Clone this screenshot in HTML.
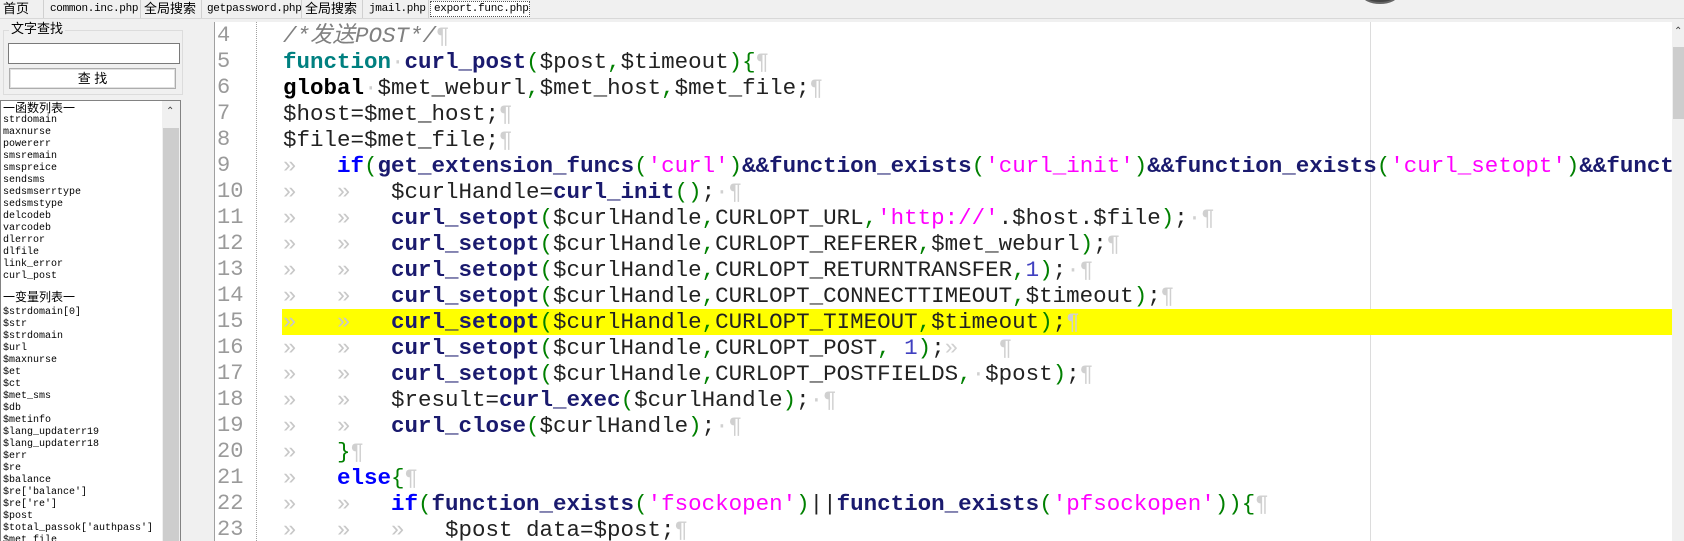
<!DOCTYPE html>
<html><head><meta charset="utf-8"><style>
*{margin:0;padding:0;box-sizing:border-box}
body{width:1684px;height:541px;overflow:hidden;background:#f0f0f0;position:relative;font-family:"Liberation Sans","Noto Sans CJK SC",sans-serif}
.tabs{position:absolute;left:0;top:0;width:1684px;height:19px;border-bottom:1px solid #d8d8d8;background:#f0f0f0}
.tab{position:absolute;top:0;height:18px;border-right:1px solid #d0d0d0;font-size:13px;line-height:18px;padding-left:3px;color:#000}
.tab.m{font-family:"Liberation Mono",monospace;font-size:11px;letter-spacing:-0.3px}
.tab.act{background:#fff;border:1px dotted #555;top:1px;height:16px;line-height:14px}
.grp{position:absolute;left:3px;top:30px;width:180px;height:65px;border:1px solid #dcdcdc}
.gt{position:absolute;left:9px;top:21px;font-size:13px;background:#f0f0f0;padding:0 2px;line-height:16px}
.inp{position:absolute;left:8px;top:43px;width:172px;height:21px;background:#fff;border:1px solid #7a7a7a}
.btn{position:absolute;left:9px;top:68px;width:167px;height:21px;border:1px solid #adadad;background:#fff;box-shadow:inset 0 0 0 1px #e1e1e1;font-size:13px;text-align:center;line-height:19px}
.list{position:absolute;left:0;top:100px;width:181px;height:441px;border:1px solid #828282;border-bottom:none;background:#fff;overflow:hidden}
.sb{position:absolute;left:161px;top:0;width:18px;height:441px;background:#f0f0f0}
.sbt{position:absolute;left:1px;top:27px;width:16px;height:414px;background:#cdcdcd}
.li{position:absolute;left:2px;font-family:"Liberation Mono",monospace;font-size:10px;line-height:12px;white-space:pre;color:#000}
.lh{font-family:"Liberation Sans","Noto Sans CJK SC",sans-serif;font-size:12px}
.ed{position:absolute;left:214px;top:22px;width:1458px;height:519px;background:#fff;border-left:1px solid #a0a0a0;overflow:hidden}
.dot{position:absolute;left:41px;top:0;height:519px;border-left:1px dotted #a0a0a0}
.guide{position:absolute;left:1155px;top:0;height:519px;border-left:1px solid #dcdcdc}
.hl{position:absolute;left:67px;top:287px;width:1391px;height:26px;background:#ffff00}
.ln{position:absolute;left:2px;font-family:"Liberation Mono",monospace;font-size:22px;color:#9a9a9a;line-height:26px}
.cd{position:absolute;left:68px;font-family:"Liberation Mono",monospace;font-size:22.5px;line-height:26px;white-space:pre;color:#222}
.t{display:inline-block;width:54px;color:#c8c8c8}
.k{font-weight:bold;color:#008080}.f{font-weight:bold;color:#1a1a6e}.b{font-weight:bold;color:#000}.i{font-weight:bold;color:#0000ff}
.s{color:#ff00ff}.p{color:#008000}.c{color:#808080;font-style:italic}.w{color:#d0d0d0}.n{color:#4040c0}
.vs{position:absolute;left:1672px;top:22px;width:12px;height:519px;background:#f0f0f0}
.vst{position:absolute;left:1px;top:25px;width:11px;height:72px;background:#cdcdcd}
</style></head><body>
<div class="tabs">
<div class="tab" style="left:0;width:44px">首页</div>
<div class="tab m" style="left:44px;width:97px;padding-left:6px">common.inc.php</div>
<div class="tab" style="left:141px;width:61px">全局搜索</div>
<div class="tab m" style="left:202px;width:100px;padding-left:5px">getpassword.php</div>
<div class="tab" style="left:302px;width:61px">全局搜索</div>
<div class="tab m" style="left:363px;width:66px;padding-left:6px">jmail.php</div>
<div class="tab m act" style="left:430px;width:100px">export.func.php</div>
</div>
<div style="position:absolute;left:1362px;top:-14px;width:36px;height:18px;border-radius:50%;background:#444;border:2px solid #666"></div>
<div class="grp"></div><div class="gt">文字查找</div>
<div class="inp"></div><div class="btn">查 找</div>
<div class="list">
<div class="sb"><div style="position:absolute;left:4px;top:5px;font-size:10px;color:#444">&#8963;</div><div class="sbt"></div></div>
<div class="li lh" style="top:1px">一函数列表一</div>
<div class="li" style="top:14px">strdomain
maxnurse
powererr
smsremain
smspreice
sendsms
sedsmserrtype
sedsmstype
delcodeb
varcodeb
dlerror
dlfile
link_error
curl_post</div>
<div class="li lh" style="top:190px">一变量列表一</div>
<div class="li" style="top:206px">$strdomain[0]
$str
$strdomain
$url
$maxnurse
$et
$ct
$met_sms
$db
$metinfo
$lang_updaterr19
$lang_updaterr18
$err
$re
$balance
$re['balance']
$re['re']
$post
$total_passok['authpass']
$met_file</div>
</div>
<div class="ed">
<div class="dot"></div><div class="guide"></div><div class="hl"></div>
<div class="ln" style="top:1px">4<br>5<br>6<br>7<br>8<br>9<br>10<br>11<br>12<br>13<br>14<br>15<br>16<br>17<br>18<br>19<br>20<br>21<br>22<br>23</div>
<div class="cd" style="top:1px"><span class="c">/*发送POST*/</span><span class="w">¶</span>
<span class="k">function</span><span class="w">·</span><span class="f">curl_post</span><span class="p">(</span>$post<span class="p">,</span>$timeout<span class="p">){</span><span class="w">¶</span>
<span class="b">global</span><span class="w">·</span>$met_weburl<span class="p">,</span>$met_host<span class="p">,</span>$met_file;<span class="w">¶</span>
$host=$met_host;<span class="w">¶</span>
$file=$met_file;<span class="w">¶</span>
<span class="t">»</span><span class="i">if</span><span class="p">(</span><span class="f">get_extension_funcs</span><span class="p">(</span><span class="s">'curl'</span><span class="p">)</span><span class="f">&amp;&amp;function_exists</span><span class="p">(</span><span class="s">'curl_init'</span><span class="p">)</span><span class="f">&amp;&amp;function_exists</span><span class="p">(</span><span class="s">'curl_setopt'</span><span class="p">)</span><span class="f">&amp;&amp;function_exists</span>
<span class="t">»</span><span class="t">»</span>$curlHandle=<span class="f">curl_init</span><span class="p">()</span>;<span class="w">·¶</span>
<span class="t">»</span><span class="t">»</span><span class="f">curl_setopt</span><span class="p">(</span>$curlHandle<span class="p">,</span>CURLOPT_URL<span class="p">,</span><span class="s">'http://'</span>.$host.$file<span class="p">)</span>;<span class="w">·¶</span>
<span class="t">»</span><span class="t">»</span><span class="f">curl_setopt</span><span class="p">(</span>$curlHandle<span class="p">,</span>CURLOPT_REFERER<span class="p">,</span>$met_weburl<span class="p">)</span>;<span class="w">¶</span>
<span class="t">»</span><span class="t">»</span><span class="f">curl_setopt</span><span class="p">(</span>$curlHandle<span class="p">,</span>CURLOPT_RETURNTRANSFER<span class="p">,</span><span class="n">1</span><span class="p">)</span>;<span class="w">·¶</span>
<span class="t">»</span><span class="t">»</span><span class="f">curl_setopt</span><span class="p">(</span>$curlHandle<span class="p">,</span>CURLOPT_CONNECTTIMEOUT<span class="p">,</span>$timeout<span class="p">)</span>;<span class="w">¶</span>
<span class="t">»</span><span class="t">»</span><span class="f">curl_setopt</span><span class="p">(</span>$curlHandle<span class="p">,</span>CURLOPT_TIMEOUT<span class="p">,</span>$timeout<span class="p">)</span>;<span class="w">¶</span>
<span class="t">»</span><span class="t">»</span><span class="f">curl_setopt</span><span class="p">(</span>$curlHandle<span class="p">,</span>CURLOPT_POST<span class="p">,</span> <span class="n">1</span><span class="p">)</span>;<span class="w">»   ¶</span>
<span class="t">»</span><span class="t">»</span><span class="f">curl_setopt</span><span class="p">(</span>$curlHandle<span class="p">,</span>CURLOPT_POSTFIELDS<span class="p">,</span><span class="w">·</span>$post<span class="p">)</span>;<span class="w">¶</span>
<span class="t">»</span><span class="t">»</span>$result=<span class="f">curl_exec</span><span class="p">(</span>$curlHandle<span class="p">)</span>;<span class="w">·¶</span>
<span class="t">»</span><span class="t">»</span><span class="f">curl_close</span><span class="p">(</span>$curlHandle<span class="p">)</span>;<span class="w">·¶</span>
<span class="t">»</span><span class="p">}</span><span class="w">¶</span>
<span class="t">»</span><span class="i">else</span><span class="p">{</span><span class="w">¶</span>
<span class="t">»</span><span class="t">»</span><span class="i">if</span><span class="p">(</span><span class="f">function_exists</span><span class="p">(</span><span class="s">'fsockopen'</span><span class="p">)</span>||<span class="f">function_exists</span><span class="p">(</span><span class="s">'pfsockopen'</span><span class="p">)){</span><span class="w">¶</span>
<span class="t">»</span><span class="t">»</span><span class="t">»</span>$post data=$post;<span class="w">¶</span></div>
</div>
<div class="vs"><div style="position:absolute;left:2px;top:4px;font-size:10px;color:#444">&#8963;</div><div class="vst"></div></div>
</body></html>
